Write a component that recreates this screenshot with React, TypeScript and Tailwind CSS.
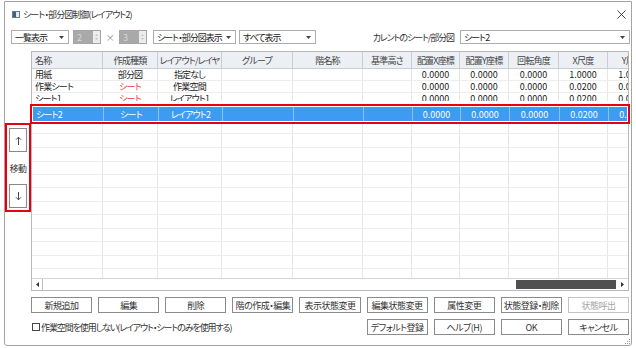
import React from 'react';

type Column = { label: string; w: string; left?: boolean; num?: boolean };

const columns: Column[] = [
  { label: '名称', w: 'w-[71px]', left: true },
  { label: '作成種類', w: 'w-[55px]' },
  { label: 'レイアウト/レイヤ', w: 'w-[64px]' },
  { label: 'グループ', w: 'w-[71px]' },
  { label: '階名称', w: 'w-[70px]' },
  { label: '基準高さ', w: 'w-[49px]' },
  { label: '配置X座標', w: 'w-[48px]', num: true },
  { label: '配置Y座標', w: 'w-[49px]', num: true },
  { label: '回転角度', w: 'w-[50px]', num: true },
  { label: 'X尺度', w: 'w-[49px]', num: true },
  { label: 'Y尺度', w: 'w-[49px]', num: true },
];

const rows: string[][] = [
  ['用紙', '部分図', '指定なし', '', '', '', '0.0000', '0.0000', '0.0000', '1.0000', '1.0000'],
  ['作業シート', 'シート', '作業空間', '', '', '', '0.0000', '0.0000', '0.0000', '0.0200', '0.0200'],
  ['シート1', 'シート', 'レイアウト1', '', '', '', '0.0000', '0.0000', '0.0000', '0.0200', '0.0200'],
];

const selected = ['シート2', 'シート', 'レイアウト2', '', '', '', '0.0000', '0.0000', '0.0000', '0.0200', '0.0200'];

// empty rows below the selection, pitch ~13.5px
const emptyHeights = ['h-[10px]', 'h-[14px]', 'h-[14px]', 'h-[13px]', 'h-[13px]', 'h-[14px]', 'h-[13px]', 'h-[14px]', 'h-[13px]', 'h-[14px]', 'h-[13px]'];

const buttons = ['新規追加', '編集', '削除', '階の作成・編集', '表示状態変更', '編集状態変更', '属性変更', '状態登録・削除', '状態呼出'];

const DownTri = () => (
  <svg width="5" height="3" viewBox="0 0 5 3" className="shrink-0">
    <path d="M0 0h5L2.5 3z" fill="#444" />
  </svg>
);

const Dropdown: React.FC<{ label: string; w: string }> = ({ label, w }) => (
  <div className={`${w} h-[14px] shrink-0 border border-[#acacac] bg-white flex items-center justify-between pl-[3px] pr-[4px]`}>
    <span className="whitespace-nowrap tracking-[-1px]">{label}</span>
    <DownTri />
  </div>
);

const Spinner: React.FC<{ value: string }> = ({ value }) => (
  <div className="w-[28px] h-[14px] shrink-0 flex border border-[#a5a5a5]">
    <div className="w-[19px] bg-[#a9a9a9] flex items-center pl-[3px] text-[#d6d6d6]">{value}</div>
    <div className="flex-1 bg-[#ececec] flex flex-col items-center justify-center gap-[2px]">
      <svg width="3" height="2" viewBox="0 0 3 2"><path d="M0 2h3L1.5 0z" fill="#c4c4c4" /></svg>
      <svg width="3" height="2" viewBox="0 0 3 2"><path d="M0 0h3L1.5 2z" fill="#c4c4c4" /></svg>
    </div>
  </div>
);

const GridRow: React.FC<{ values: string[]; h: string; sel?: boolean }> = ({ values, h, sel }) => (
  <div className={`${h} flex shrink-0 overflow-hidden ${sel ? 'bg-[#3d9bf2] text-white' : 'border-b border-[#ededed]'}`}>
    {columns.map((c, i) => (
      <div
        key={i}
        className={`${c.w} shrink-0 border-r flex items-center whitespace-nowrap ${c.num ? 'tracking-normal' : 'tracking-[-0.8px]'} ${sel ? 'border-[#8cc3f7]' : 'border-[#e6e6e6]'} ${c.left ? 'pl-[3px]' : 'justify-center'} ${!sel && i === 1 && values[i] === 'シート' ? 'text-[#ef3a3a]' : ''}`}
      >
        {values[i]}
      </div>
    ))}
  </div>
);

const ArrowBtn: React.FC<{ down?: boolean }> = ({ down }) => (
  <div className="w-[18px] h-[24px] border border-[#8a8a8a] bg-white flex items-center justify-center">
    <svg width="7" height="9" viewBox="0 0 7 9" className={down ? 'rotate-180' : ''}>
      <path d="M3.5 1.2V9M1 3.7l2.5-2.5L6 3.7" stroke="#333" strokeWidth="0.9" fill="none" />
    </svg>
  </div>
);

export default function App() {
  const empty = columns.map(() => '');
  return (
    <div className="w-[636px] h-[348px] bg-white pt-[1px] pl-[4px] font-['Noto_Sans_CJK_JP',sans-serif] [font-feature-settings:'palt'] text-[9px] leading-none tracking-[-0.5px] text-[#222]">
      <div className="relative w-[628px] h-[345px] border border-[#a3a3a3] rounded-b-[3px] flex flex-col pb-[10px] bg-white">
        {/* Title bar */}
        <div className="h-[24px] shrink-0 flex items-center pl-[7px] pr-[5px]">
          <svg width="8" height="7" viewBox="0 0 8 7">
            <rect x="0.5" y="0.5" width="7" height="6" fill="#e4e9ef" stroke="#6d7d8c" />
            <rect x="1" y="1" width="3" height="5" fill="#3f6283" />
          </svg>
          <span className="ml-[3px] text-[#333] tracking-[-0.9px]">シート・部分図制御(レイアウト2)</span>
          <svg width="9" height="9" viewBox="0 0 9 9" className="ml-auto">
            <path d="M.5.5l8 8M8.5.5l-8 8" stroke="#333" strokeWidth="0.9" />
          </svg>
        </div>

        {/* Toolbar */}
        <div className="mt-[4px] h-[14px] shrink-0 flex items-center pl-[6px] pr-[1px]">
          <Dropdown label="一覧表示" w="w-[58px]" />
          <div className="ml-[4px]"><Spinner value="2" /></div>
          <div className="w-[18px] text-center text-[#888]">×</div>
          <Spinner value="3" />
          <div className="ml-[6px]"><Dropdown label="シート・部分図表示" w="w-[83px]" /></div>
          <div className="ml-[3px]"><Dropdown label="すべて表示" w="w-[77px]" /></div>
          <span className="ml-auto text-[#333] tracking-[-1.1px]">カレントのシート/部分図</span>
          <div className="ml-[6px]"><Dropdown label="シート2" w="w-[170px]" /></div>
        </div>

        {/* Move buttons + grid */}
        <div className="mt-[7px] flex shrink-0">
          <div className="w-[26px] shrink-0">
            <div className="mt-[72px] h-[89px] border-2 border-[#e60012] flex flex-col items-center pt-[3px]">
              <ArrowBtn />
              <div className="h-[32px] flex items-center text-[#333]">移動</div>
              <ArrowBtn down />
            </div>
          </div>

          <div className="w-[598px] h-[240px] border border-[#b8b8b8] flex flex-col bg-white">
            <div className="h-[17px] flex shrink-0 overflow-hidden bg-[#eceff4] border-b border-[#c9cdd4] text-[#444]">
              {columns.map((c, i) => (
                <div key={i} className={`${c.w} shrink-0 border-r border-[#c9cdd4] flex items-center whitespace-nowrap tracking-[-0.8px] ${c.left ? 'pl-[3px]' : 'justify-center'}`}>
                  {c.label}
                </div>
              ))}
            </div>
            <GridRow values={rows[0]} h="h-[12px]" />
            <GridRow values={rows[1]} h="h-[12px]" />
            <div className="h-[8px] shrink-0 overflow-hidden">
              <GridRow values={rows[2]} h="h-[12px]" />
            </div>
            <div className="h-[3px] shrink-0" />
            <div className="-mx-[2px] h-[20px] shrink-0 border-2 border-[#e60012] bg-white p-[1px]">
              <GridRow values={selected} h="h-[14px]" sel />
            </div>
            {emptyHeights.map((h, i) => (
              <GridRow key={i} values={empty} h={h} />
            ))}
            <div className="flex-1 flex overflow-hidden">
              {columns.map((c, i) => (
                <div key={i} className={`${c.w} shrink-0 border-r border-[#e6e6e6]`} />
              ))}
            </div>
            {/* horizontal scrollbar */}
            <div className="h-[12px] shrink-0 flex border-t border-[#d4d4d4] bg-white">
              <div className="w-[11px] border-r border-[#bdbdbd] flex items-center justify-center">
                <svg width="3" height="5" viewBox="0 0 3 5"><path d="M3 0v5L0 2.5z" fill="#333" /></svg>
              </div>
              <div className="flex-1 flex py-[1px]">
                <div className="flex-1" />
                <div className="w-[100px] bg-[#505050]" />
              </div>
              <div className="w-[12px] flex items-center justify-center">
                <svg width="3" height="5" viewBox="0 0 3 5"><path d="M0 0v5L3 2.5z" fill="#333" /></svg>
              </div>
            </div>
          </div>
        </div>

        {/* Buttons */}
        <div className="mt-[6px] ml-[26px] w-[598px] grid grid-cols-9 gap-x-[6px] gap-y-[6px]">
          {buttons.map((b, i) => (
            <div
              key={b}
              className={`h-[16px] border bg-white flex items-center justify-center whitespace-nowrap ${i === 8 ? 'border-[#c4c4c4] text-[#a6a6a6]' : 'border-[#8b8b8b] text-[#333]'}`}
            >
              {b}
            </div>
          ))}
          <div className="col-span-5 flex items-center pl-[1px] text-[#333]">
            <div className="w-[8px] h-[8px] shrink-0 border border-[#444] bg-white mr-[1px]" />
            <span className="whitespace-nowrap tracking-[-1.1px]">作業空間を使用しない(レイアウト・シートのみを使用する)</span>
          </div>
          {['デフォルト登録', 'ヘルプ(H)', 'OK', 'キャンセル'].map((b) => (
            <div key={b} className="h-[16px] border border-[#8b8b8b] bg-white flex items-center justify-center text-[#333] whitespace-nowrap">
              {b}
            </div>
          ))}
        </div>

        {/* resize grip */}
        <svg width="5" height="5" viewBox="0 0 5 5" className="absolute right-[1px] bottom-[1px]">
          <rect x="4" y="0" width="1" height="1" fill="#9a9a9a" />
          <rect x="2" y="2" width="1" height="1" fill="#9a9a9a" />
          <rect x="4" y="2" width="1" height="1" fill="#9a9a9a" />
          <rect x="0" y="4" width="1" height="1" fill="#9a9a9a" />
          <rect x="2" y="4" width="1" height="1" fill="#9a9a9a" />
          <rect x="4" y="4" width="1" height="1" fill="#9a9a9a" />
        </svg>
      </div>
    </div>
  );
}
